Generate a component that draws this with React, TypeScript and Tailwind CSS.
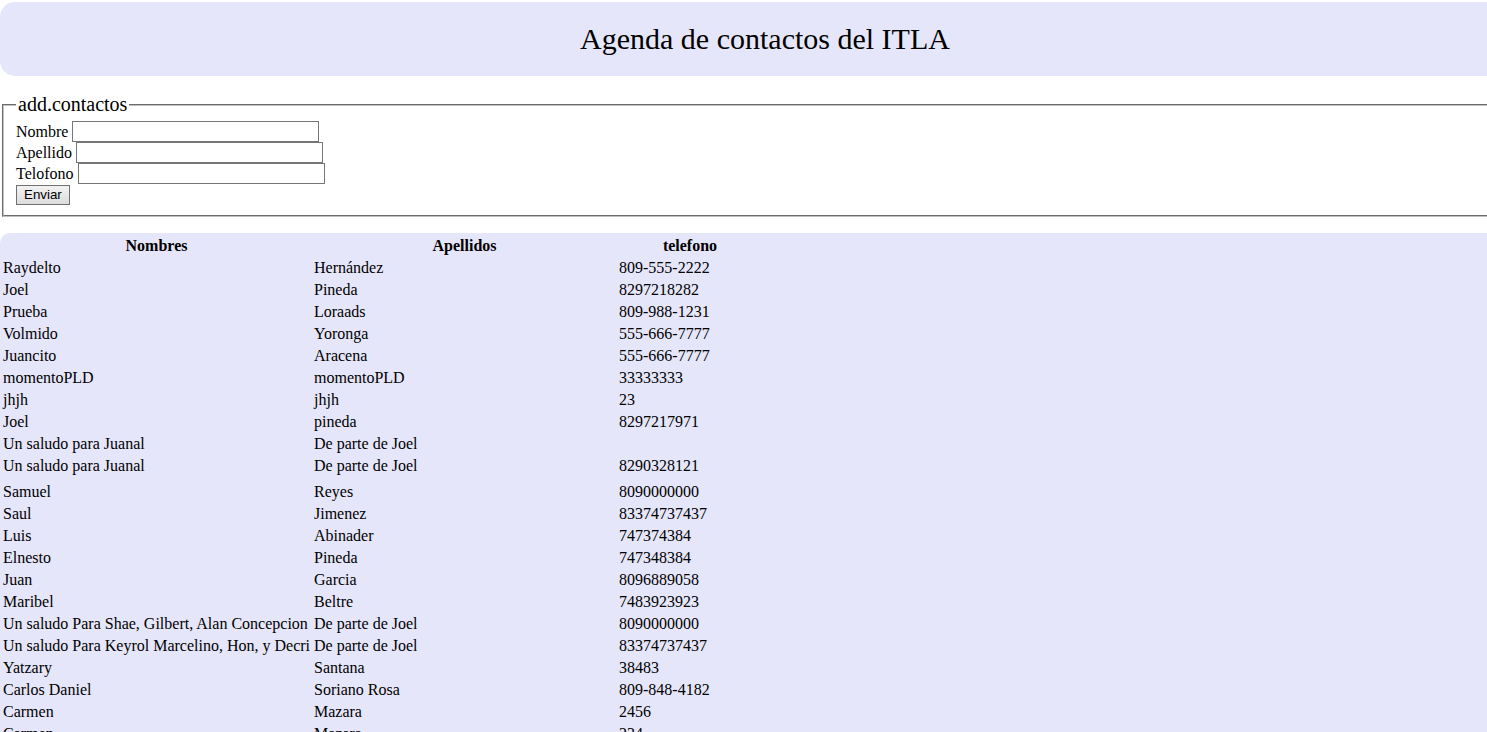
import React from "react";

const rows: [string, string, string][] = [
  ["Raydelto", "Hernández", "809-555-2222"],
  ["Joel", "Pineda", "8297218282"],
  ["Prueba", "Loraads", "809-988-1231"],
  ["Volmido", "Yoronga", "555-666-7777"],
  ["Juancito", "Aracena", "555-666-7777"],
  ["momentoPLD", "momentoPLD", "33333333"],
  ["jhjh", "jhjh", "23"],
  ["Joel", "pineda", "8297217971"],
  ["Un saludo para Juanal", "De parte de Joel", ""],
  ["Un saludo para Juanal", "De parte de Joel", "8290328121"],
  ["Samuel", "Reyes", "8090000000"],
  ["Saul", "Jimenez", "83374737437"],
  ["Luis", "Abinader", "747374384"],
  ["Elnesto", "Pineda", "747348384"],
  ["Juan", "Garcia", "8096889058"],
  ["Maribel", "Beltre", "7483923923"],
  ["Un saludo Para Shae, Gilbert, Alan Concepcion", "De parte de Joel", "8090000000"],
  ["Un saludo Para Keyrol Marcelino, Hon, y Decri", "De parte de Joel", "83374737437"],
  ["Yatzary", "Santana", "38483"],
  ["Carlos Daniel", "Soriano Rosa", "809-848-4182"],
  ["Carmen", "Mazara", "2456"],
  ["Carmen", "Mazara", "234"],
];

export default function App() {
  return (
    <div className="w-full h-[732px] overflow-hidden bg-white text-black font-['Liberation_Serif','Times_New_Roman',serif] text-[16px]">
      <div className="w-[1530px]">
        <div className="mt-[2px] h-[74px] rounded-[15px] bg-[#e6e6fa] flex items-center justify-center">
          <h1 className="text-[30px] leading-[34px] font-normal">Agenda de contactos del ITLA</h1>
        </div>

        <fieldset className="mt-[17px] mx-[2px] border-2 [border-style:groove] border-[#c0c0c0] pt-[5px] px-[12px] pb-[10px]">
          <legend className="px-[2px] text-[20px] leading-[23px]">add.contactos</legend>
          <div className="flex items-center h-[21px]">
            <span className="leading-[18px]">Nombre</span>
            <input className="ml-[4px] w-[247px] h-[21px] border border-[#767676] bg-white" />
          </div>
          <div className="flex items-center h-[21px]">
            <span className="leading-[18px]">Apellido</span>
            <input className="ml-[4px] w-[247px] h-[21px] border border-[#767676] bg-white" />
          </div>
          <div className="flex items-center h-[21px]">
            <span className="leading-[18px]">Telofono</span>
            <input className="ml-[4px] w-[247px] h-[21px] border border-[#767676] bg-white" />
          </div>
          <div className="mt-[1px] flex">
            <button className="h-[20px] px-[7px] border border-[#707070] bg-gradient-to-b from-[#f2f2f2] to-[#dddddd] font-['Liberation_Sans',Arial,sans-serif] text-[13.33px] leading-[16px]">
              Enviar
            </button>
          </div>
        </fieldset>

        <div className="mt-[16px] pt-[1px] rounded-t-[10px] bg-[#e6e6fa]">
          <table className="table-fixed w-[762px] border-separate border-spacing-[2px]">
            <colgroup>
              <col className="w-[309px]" />
              <col className="w-[303px]" />
              <col className="w-[144px]" />
            </colgroup>
            <thead>
              <tr>
                <th className="p-[1px] leading-[18px] font-bold text-center">Nombres</th>
                <th className="p-[1px] leading-[18px] font-bold text-center">Apellidos</th>
                <th className="p-[1px] leading-[18px] font-bold text-center">telefono</th>
              </tr>
            </thead>
            <tbody>
              {rows.map((r, i) => {
                const cls =
                  i === 9
                    ? "pt-[1px] px-[1px] pb-[5px] leading-[18px] align-top whitespace-nowrap"
                    : "p-[1px] leading-[18px] whitespace-nowrap";
                return (
                  <tr key={i}>
                    <td className={cls}>{r[0]}</td>
                    <td className={cls}>{r[1]}</td>
                    <td className={cls}>{r[2]}</td>
                  </tr>
                );
              })}
            </tbody>
          </table>
        </div>
      </div>
    </div>
  );
}
